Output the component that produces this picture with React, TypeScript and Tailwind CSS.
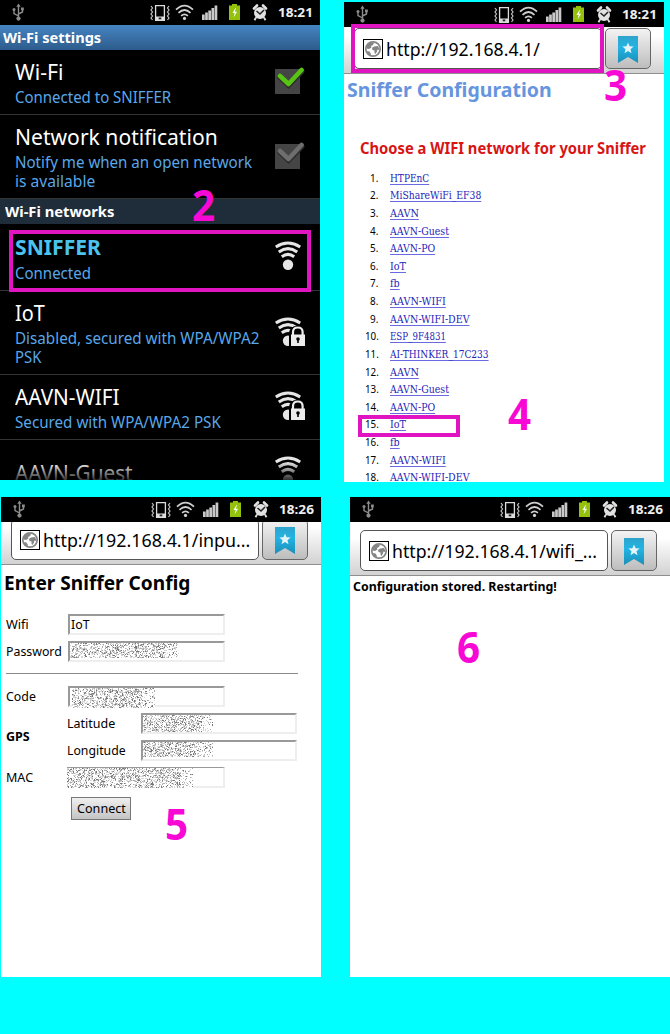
import React, { useLayoutEffect, useRef } from "react";

function Fit({ w, className = "", children }: { w: number; className?: string; children: React.ReactNode }) {
  const ref = useRef<HTMLSpanElement>(null);
  useLayoutEffect(() => {
    const el = ref.current;
    if (el) el.style.transform = `scaleX(${w / el.offsetWidth})`;
  }, [w]);
  return (
    <span className={`block ${className}`} style={{ width: w }}>
      <span ref={ref} className="inline-block origin-left whitespace-nowrap">{children}</span>
    </span>
  );
}

function StatusIcons() {
  return (
    <svg width="272" height="25" viewBox="0 0 272 25" fill="none">
      <g stroke="#8c8c8c" strokeWidth="1.4">
        <path d="M18.500 6v13M18.500 16l-4.500-2.500v-3M18.500 14l4-2v-3" />
        <path d="M18.500 3.500l2.200 3.200h-4.400z" fill="#8c8c8c" stroke="none" />
        <circle cx="18.500" cy="18.600" r="2.100" fill="#8c8c8c" stroke="none" />
        <circle cx="14" cy="9.600" r="1.500" fill="#8c8c8c" stroke="none" />
        <path d="M21 7.500h2.800v2.800H21z" fill="#8c8c8c" stroke="none" />
      </g>
      <path d="M155.600 5.600h8.800v14.800h-8.800z" stroke="#dcdcdc" strokeWidth="1.300" />
      <path d="M155 16.500h10V21h-10z" fill="#dcdcdc" />
      <path d="M158.700 17.500h2.600v1.800h-2.600z" fill="#222" />
      <path d="M151 6l1.500 2-1.500 2 1.500 2-1.500 2 1.500 2-1.500 2 1.500 2M169 6l-1.500 2 1.500 2-1.500 2 1.500 2-1.500 2 1.500 2-1.500 2" stroke="#c4c4c4" strokeWidth="1.200" />
      <g stroke="#d0d0d0" strokeWidth="1.700">
        <path d="M176 9.700q8.500-8.200 17 0" />
        <path d="M178.500 12.800q6-5.600 12 0" />
        <path d="M181.100 15.800q3.400-3 6.800 0" />
      </g>
      <circle cx="184.500" cy="18.400" r="1.600" fill="#d4d4d4" />
      <path d="M202 14.500h2.700V20H202zM205.150 12.500h2.700V20h-2.700zM208.300 10.500h2.700V20h-2.700zM211.450 8h2.700v12h-2.700zM214.600 5.500h2.700V20h-2.700z" fill="#c9c9c9" />
      <path d="M232 4h5v1.500h3V20h-11V5.500h3z" fill="#94c20c" />
      <path d="M235.500 8l-3 5h2.200l-1.200 4.500 3.600-5.700h-2.300l1.200-3.800z" fill="#fff" />
      <circle cx="260" cy="13" r="6" fill="#e2e2e2" />
      <path d="M254 8.500l3-3M266 8.500l-3-3" stroke="#e2e2e2" strokeWidth="2.600" strokeLinecap="round" />
      <path d="M256 17.500l-1.500 2.700M264 17.500l1.500 2.700" stroke="#e2e2e2" strokeWidth="1.800" />
      <path d="M256.500 11l3.500 3 4-4" stroke="#222" strokeWidth="1.500" />
    </svg>
  );
}

function StatusBar({ time }: { time: string }) {
  return (
    <div className="flex h-[25px] shrink-0 bg-black">
      <StatusIcons />
      <Fit w={34.5} className="ml-[6px] text-[13px] font-bold leading-[25px] text-[#eee]">{time}</Fit>
    </div>
  );
}

function Toolbar({ url, w, clip }: { url: string; w: number; clip: string }) {
  return (
    <div className={`flex shrink-0 items-end overflow-hidden ${clip}`}>
      <div className="flex h-[54px] w-full shrink-0 gap-[3px] border-b border-[#8f8f8f] bg-linear-to-b from-white from-30% to-[#d2d2d2] pl-[10px] pt-[8px]">
        <div className="flex h-[41px] w-[248px] items-center rounded-[5px] border border-[#555] bg-white pl-[8px]">
          <div className="flex h-5 w-5 shrink-0 items-center justify-center border border-black">
            <svg width="18" height="18" viewBox="0 0 18 18">
              <circle cx="9" cy="9" r="7.200" fill="#fff" stroke="#858585" strokeWidth="1.700" />
              <path d="M2 8l1.500-3.500L7 2.500l3 .5-1 2-2 1 .5 1.500L5 9 2.500 8.500zM8 8l2-1.500 4-.5 1.500 3-.5 1-1.500-.5-.5 2-1.500 2.500-1-1V10.500L8.500 10zM3 11l2.500.5L7 14l-.5 1.500L4 14z" fill="#858585" />
            </svg>
          </div>
          <Fit w={w} className="ml-[3px] text-[18px] leading-[24px] text-black">{url}</Fit>
        </div>
        <div className="flex h-[41px] w-[46px] justify-center rounded-[5px] border border-[#666] bg-linear-to-b from-[#f3f3f3] to-[#bdbdbd] pt-[7px]">
          <svg width="20" height="28" viewBox="0 0 20 28">
            <defs>
              <linearGradient id="ribbon" x1="0" y1="0" x2="0" y2="1">
                <stop offset="0" stopColor="#2fa3cb" />
                <stop offset="0.400" stopColor="#22b4e4" />
                <stop offset="1" stopColor="#1b8fb8" />
              </linearGradient>
            </defs>
            <path d="M0 0h20v27l-10-6L0 27z" fill="url(#ribbon)" />
            <path d="M10 6.500l1.600 3.800 4 .3-3.100 2.600 1 4-3.500-2.200-3.500 2.200 1-4-3.100-2.600 4-.3z" fill="#e6f3f8" />
          </svg>
        </div>
      </div>
    </div>
  );
}

function Check({ color }: { color: string }) {
  return (
    <svg width="30" height="30" viewBox="0 0 30 30" className="shrink-0">
      <path d="M0 2h25v25H0z" fill="#454545" />
      <path d="M5 10.500l8.500 8L27 4.500" fill="none" stroke="#2b2b2b" strokeWidth="5" strokeLinecap="round" />
      <path d="M5 9l8.500 8L26.500 3" fill="none" stroke={color} strokeWidth="4.600" strokeLinecap="round" strokeLinejoin="round" />
    </svg>
  );
}

function Signal({ locked = false, className = "" }: { locked?: boolean; className?: string }) {
  return (
    <svg width="31" height="32" viewBox="0 0 31 32" className={`shrink-0 ${className}`}>
      <g fill="none" stroke="#e6e6e6" strokeWidth="3">
        <path d="M.8 6Q13 -1.900 25.200 6" />
        <path d="M3.800 11Q13 4.200 22.200 11" />
        <path d="M6.800 15.800Q13 11 19.200 15.800" />
      </g>
      <circle cx="13" cy="23.700" r="5.200" fill="#e6e6e6" />
      {locked && (
        <g>
          <path d="M14 30V17q0-7.500 8-8.500 8 1 8 8.500v13z" fill="#000" />
          <path d="M18 19v-4q0-4.500 4.800-4.500t4.800 4.500v4" fill="none" stroke="#ececec" strokeWidth="2.200" />
          <path d="M16 17.500h14V29H16z" fill="#ececec" />
          <circle cx="23" cy="22" r="1.800" fill="#000" />
          <path d="M22.200 22h1.600v4h-1.600z" fill="#000" />
        </g>
      )}
    </svg>
  );
}

function Item({ title, tw, lines = [], h, icon, bold = false }: {
  title: string; tw: number; lines?: [string, number][]; h: string; icon: React.ReactNode; bold?: boolean;
}) {
  return (
    <div className={`flex shrink-0 items-center border-b border-[#333] pl-[15px] ${h}`}>
      <div className="w-[260px]">
        <Fit w={tw} className={bold ? "h-[26px] text-[22px] font-bold leading-[26px] text-[#4cc3ec]" : "h-[26px] text-[22.500px] leading-[27px] text-white"}>{title}</Fit>
        {lines.length > 0 && (
          <div className="mt-[3px]">
            {lines.map(([t, w]) => (
              <Fit key={t} w={w} className={bold ? "h-[19px] text-[16px] leading-[23px] text-[#5aa7e8]" : "h-[19px] text-[16px] leading-[21px] text-[#5aa7e8]"}>{t}</Fit>
            ))}
          </div>
        )}
      </div>
      {icon}
    </div>
  );
}

function Noise({ w, h, seed }: { w: number; h: number; seed: number }) {
  let s = seed;
  const rnd = () => {
    s = (s * 1103515245 + 12345) % 2147483648;
    return s / 2147483648;
  };
  const tones = ["#777", "#aaa", "#d4d4d4"];
  const paths = ["", "", ""];
  for (let y = 0; y < h; y++)
    for (let x = 0; x < w; x++) {
      const r = rnd();
      const fade = x > w - 14 ? 0.5 : 1;
      if (r < 0.1 * fade) paths[0] += `M${x} ${y}h1v1h-1z`;
      else if (r < 0.27 * fade) paths[1] += `M${x} ${y}h1v1h-1z`;
      else if (r < 0.5 * fade) paths[2] += `M${x} ${y}h1v1h-1z`;
    }
  return (
    <svg width={w} height={h} className="shrink-0 bg-white">
      {paths.map((d, i) => <path key={i} d={d} fill={tones[i]} />)}
    </svg>
  );
}

function Field({ children, className = "" }: { children?: React.ReactNode; className?: string }) {
  return (
    <div className={`flex h-[21px] w-[157px] shrink-0 border-2 border-b-[#eee] border-l-[#999] border-r-[#eee] border-t-[#999] bg-white ${className}`}>
      {children}
    </div>
  );
}

function Label({ t, w, className = "" }: { t: string; w: number; className?: string }) {
  return <Fit w={w} className={`text-[13px] leading-[21px] ${className}`}>{t}</Fit>;
}

function Step({ n, className }: { n: string; className: string }) {
  return <span className={`absolute origin-left scale-x-[0.94] text-[43px] font-bold leading-[42px] text-[#f808d4] ${className}`}>{n}</span>;
}

const networks: [string, number][] = [
  ["HTPEnC", 39.5], ["MiShareWiFi_EF38", 91.5], ["AAVN", 28.5], ["AAVN-Guest", 59], ["AAVN-PO", 45.5],
  ["IoT", 15.5], ["fb", 10], ["AAVN-WIFI", 56], ["AAVN-WIFI-DEV", 79.5], ["ESP_9F4831", 56],
  ["AI-THINKER_17C233", 99], ["AAVN", 28.5], ["AAVN-Guest", 59], ["AAVN-PO", 45.5], ["IoT", 15.5],
  ["fb", 10], ["AAVN-WIFI", 56], ["AAVN-WIFI-DEV", 79.5],
];

export default function App() {
  return (
    <div className="relative h-[1034px] w-[670px] overflow-hidden bg-[#00ffff] font-['Noto_Sans',sans-serif] text-black">
      <div className="flex h-[497px] items-start gap-6">
        <section className="relative flex h-[480px] w-[320px] flex-col overflow-hidden bg-black">
          <StatusBar time="18:21" />
          <div className="h-[25px] shrink-0 bg-linear-to-b from-[#4685c2] to-[#2d5c8c] pl-[3px]">
            <Fit w={98} className="text-[15px] font-bold leading-[25px] text-white">Wi-Fi settings</Fit>
          </div>
          <Item title="Wi-Fi" tw={48} lines={[["Connected to SNIFFER", 156.5]]} h="h-[65px]" icon={<Check color="#57c414" />} />
          <Item title="Network notification" tw={202.5} lines={[["Notify me when an open network", 237], ["is available", 80]]} h="h-[84px]" icon={<Check color="#6e6e6e" />} />
          <div className="h-[25px] shrink-0 bg-[#1f2c3a] pl-[5px]">
            <Fit w={109} className="text-[15px] font-bold leading-[25px] text-white">Wi-Fi networks</Fit>
          </div>
          <Item bold title="SNIFFER" tw={85.5} lines={[["Connected", 76]]} h="h-[67px]" icon={<Signal />} />
          <Item title="IoT" tw={30} lines={[["Disabled, secured with WPA/WPA2", 244.5], ["PSK", 26]]} h="h-[84px]" icon={<Signal locked />} />
          <Item title="AAVN-WIFI" tw={105} lines={[["Secured with WPA/WPA2 PSK", 206]]} h="h-[65px]" icon={<Signal locked />} />
          <Item title="AAVN-Guest" tw={118} h="h-[65px]" icon={<Signal />} />
          <div className="absolute bottom-0 left-0 h-[18px] w-full bg-linear-to-b from-transparent to-black/80" />
        </section>
        <section className="mt-[2px] flex h-[480px] w-[320px] flex-col overflow-hidden bg-white">
          <StatusBar time="18:21" />
          <Toolbar url="http://192.168.4.1/" w={154} clip="h-[47px]" />
          <Fit w={205} className="ml-[3px] mt-[3px] h-[26px] text-[19.500px] font-bold leading-[26px] text-[#6695de]">Sniffer Configuration</Fit>
          <Fit w={286} className="ml-[15.500px] mt-[33px] h-[24px] text-[16.500px] font-bold leading-[24px] text-[#d81414]">Choose a WIFI network for your Sniffer</Fit>
          <ol className="mt-[9.800px]">
            {networks.map(([name, w], i) => (
              <li key={i} className="flex h-[17.620px]">
                <span className="flex w-[34.500px] justify-end text-[10.500px] leading-[17px]">
                  <Fit w={i < 9 ? 8.5 : 14}>{i + 1}.</Fit>
                </span>
                <Fit w={w} className="ml-[11.500px] font-['DejaVu_Serif',serif] text-[10.500px] leading-[17px] text-[#2424b8]">
                  <u className="decoration-[#6a6ae0] underline-offset-[2px]">{name}</u>
                </Fit>
              </li>
            ))}
          </ol>
        </section>
      </div>
      <div className="flex gap-[29px] pl-px">
        <section className="flex h-[480px] w-[320px] flex-col bg-white">
          <StatusBar time="18:26" />
          <Toolbar url="http://192.168.4.1/inpu..." w={207} clip="h-[43px]" />
          <Fit w={186} className="ml-[2.500px] mt-[5px] h-[26px] text-[19.500px] font-bold leading-[26px]">Enter Sniffer Config</Fit>
          <div className="ml-[5px] mt-[18px] flex flex-col gap-[6px]">
            <div className="flex">
              <div className="w-[62px]"><Label t="Wifi" w={22.5} /></div>
              <Field className="pl-px"><Label t="IoT" w={19} className="-mt-[2px]" /></Field>
            </div>
            <div className="flex">
              <div className="w-[62px]"><Label t="Password" w={56} /></div>
              <Field><Noise w={109} h={15} seed={7} /></Field>
            </div>
          </div>
          <div className="ml-[5px] mt-[11px] h-px w-[292px] shrink-0 bg-[#8a8a8a]" />
          <div className="ml-[5px] mt-[12px] flex">
            <div className="w-[62px]"><Label t="Code" w={29.5} /></div>
            <Field className="pl-[2px]"><Noise w={83} h={20} seed={21} /></Field>
          </div>
          <div className="ml-[5px] mt-[6px] flex items-center">
            <div className="w-[61px] pb-[2px]"><Label t="GPS" w={24} className="font-bold" /></div>
            <div className="flex flex-col gap-[6px]">
              <div className="flex">
                <div className="w-[74px]"><Label t="Latitude" w={48} /></div>
                <Field className="!w-[156px]"><Noise w={70} h={17} seed={33} /></Field>
              </div>
              <div className="flex">
                <div className="w-[74px]"><Label t="Longitude" w={58.5} /></div>
                <Field className="!w-[156px]"><Noise w={70} h={15} seed={45} /></Field>
              </div>
            </div>
          </div>
          <div className="ml-[5px] mt-[6px] flex">
            <div className="w-[61px]"><Label t="MAC" w={27} /></div>
            <Field className="!w-[158px] !border-l-0 !border-t"><Noise w={126} h={20} seed={57} /></Field>
          </div>
          <button className="ml-[70px] mt-[9px] flex h-[23px] w-[60px] shrink-0 justify-center border border-[#777] bg-linear-to-b from-[#f0f0f0] to-[#c4c4c4]">
            <Label t="Connect" w={48.5} />
          </button>
        </section>
        <section className="flex h-[480px] w-[320px] flex-col bg-white">
          <StatusBar time="18:26" />
          <Toolbar url="http://192.168.4.1/wifi_..." w={205} clip="h-[54px]" />
          <Fit w={204} className="ml-[3px] text-[12.500px] font-bold leading-[21px]">Configuration stored. Restarting!</Fit>
        </section>
      </div>
      <div className="absolute left-[9px] top-[230px] h-[62px] w-[302px] border-4 border-[#e014c0]" />
      <div className="absolute left-[351px] top-[24px] h-[49px] w-[253px] border-4 border-[#e014c0]" />
      <div className="absolute left-[358px] top-[415px] h-[22px] w-[102px] border-4 border-[#e014c0]" />
      <Step n="2" className="left-[192px] top-[184px]" />
      <Step n="3" className="left-[604px] top-[64px]" />
      <Step n="4" className="left-[508px] top-[393px]" />
      <Step n="5" className="left-[165px] top-[803px]" />
      <Step n="6" className="left-[457px] top-[626px]" />
    </div>
  );
}
